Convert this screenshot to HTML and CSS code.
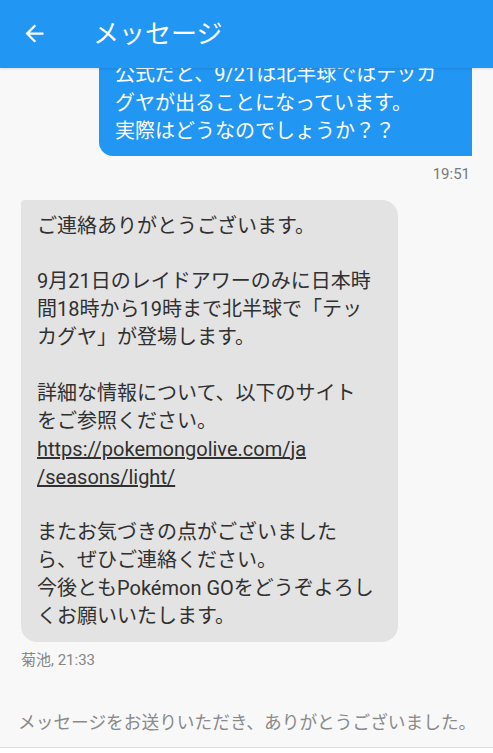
FILE: index.html
```html
<!DOCTYPE html>
<html lang="ja">
<head>
<meta charset="utf-8">
<title>メッセージ</title>
<link rel="stylesheet" href="styles.css">
</head>
<body>
<div class="screen">
  <header class="appbar">
    <svg class="back" viewBox="0 0 24 24" aria-hidden="true"><path d="M20 11H7.83l5.59-5.59L12 4l-8 8 8 8 1.41-1.41L7.83 13H20v-2z" fill="#fff"/></svg>
    <h1 class="title">メッセージ</h1>
  </header>
  <main class="thread">
    <div class="bubble out">公式だと、9/21は北半球ではテッカ<br>グヤが出ることになっています。<br>実際はどうなのでしょうか？？</div>
    <div class="time-out">19:51</div>
    <div class="bubble in">ご連絡ありがとうございます。<br><br>9月21日のレイドアワーのみに日本時<br>間18時から19時まで北半球で「テッ<br>カグヤ」が登場します。<br><br>詳細な情報について、以下のサイト<br>をご参照ください。<br><a class="link" href="#">https://pokemongolive.com/ja<br>/seasons/light/</a><br><br>またお気づきの点がございました<br>ら、ぜひご連絡ください。<br>今後ともPokémon GOをどうぞよろし<br>くお願いいたします。</div>
    <div class="meta">菊池, 21:33</div>
  </main>
  <footer class="notice">メッセージをお送りいただき、ありがとうございました。</footer>
</div>
</body>
</html>
```
FILE: styles.css
```css
html, body {
  margin: 0;
  padding: 0;
}
body {
  background: #ffffff;
  font-family: Roboto, "Noto Sans CJK JP", "Noto Sans", sans-serif;
  width: 493px;
  height: 753px;
  overflow: hidden;
}
.screen {
  display: flex;
  flex-direction: column;
  height: 748px;
  background: #f8f8f8;
}
.appbar {
  position: relative;
  z-index: 2;
  flex: 0 0 68px;
  height: 68px;
  background: #2196f3;
  display: flex;
  align-items: center;
  padding-left: 21px;
  box-shadow: 0 1px 2px rgba(0,0,0,0.12);
}
.back {
  width: 27px;
  height: 27px;
  margin-right: 45px;
  margin-top: -1px;
}
.title {
  margin: 0;
  font-size: 26px;
  font-weight: 400;
  color: #ffffff;
  line-height: 1;
  margin-top: -1px;
}
.thread {
  flex: 1;
  overflow: hidden;
  display: flex;
  flex-direction: column;
  padding: 0 21px;
}
.bubble {
  box-sizing: border-box;
  font-size: 20px;
  white-space: nowrap;
}
.out {
  align-self: flex-end;
  width: 373px;
  margin-top: -18px;
  padding: 10px 16px 10px;
  background: #2196f3;
  color: #ffffff;
  line-height: 28.5px;
  border-radius: 14px 14px 0 14px;
}
.time-out {
  align-self: flex-end;
  margin-top: 8px;
  margin-right: 2px;
  font-size: 15px;
  line-height: 20px;
  color: #7a7a7a;
}
.in {
  align-self: flex-start;
  width: 377px;
  margin-top: 16px;
  padding: 13px 16px 11px;
  background: #e3e3e3;
  color: #303030;
  line-height: 27.9px;
  border-radius: 4px 16px 16px 16px;
}
.link {
  color: #303030;
  text-decoration: underline;
}
.meta {
  margin-top: 8px;
  font-size: 15px;
  line-height: 20px;
  color: #858585;
}
.notice {
  flex: 0 0 auto;
  padding: 0 0 12px 18px;
  font-size: 17.7px;
  line-height: 24px;
  color: #8a8a8a;
  white-space: nowrap;
  border-bottom: 1px solid #dddddd;
}
```
